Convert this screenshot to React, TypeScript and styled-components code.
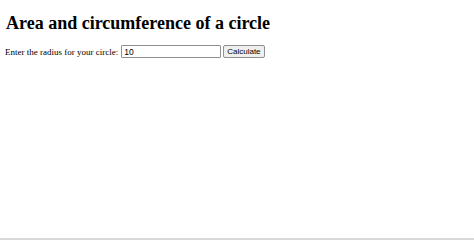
import styled, { createGlobalStyle } from 'styled-components'

const GlobalStyles = createGlobalStyle`
  html, body {
    margin: 0;
    padding: 0;
    background: #ffffff;
  }
  #root {
    min-height: 100vh;
    display: flex;
    flex-direction: column;
  }
`

const Page = styled.main`
  flex: 1;
  padding: 0 5px;
  font-family: "Liberation Serif", "Times New Roman", serif;
  color: #000;
`

const Title = styled.h1`
  margin: 12px 0 0 1px;
  font-size: 18px;
  font-weight: bold;
  line-height: 22px;
`

const Row = styled.form`
  display: flex;
  align-items: center;
  margin-top: 11px;
  font-size: 9px;
`

const Label = styled.label`
  margin-right: 3px;
`

const RadiusInput = styled.input`
  width: 100px;
  height: 13px;
  box-sizing: border-box;
  padding: 0 2px;
  border: 1px solid #8f8f8f;
  border-radius: 1px;
  font-family: "Liberation Sans", Arial, sans-serif;
  font-size: 8.5px;
`

const Button = styled.button`
  margin-left: 2px;
  height: 13px;
  box-sizing: border-box;
  padding: 0 3px;
  border: 1px solid #8f8f8f;
  border-radius: 2px;
  background: #efefef;
  font-family: "Liberation Sans", Arial, sans-serif;
  font-size: 8px;
  line-height: 1;
`

const BottomLine = styled.div`
  height: 2px;
  background: #d9d9d9;
`

function App() {
  return (
    <>
      <GlobalStyles />
      <Page>
        <Title>Area and circumference of a circle</Title>
        <Row onSubmit={(e) => e.preventDefault()}>
          <Label htmlFor="radius">Enter the radius for your circle:</Label>
          <RadiusInput id="radius" defaultValue="10" />
          <Button type="submit">Calculate</Button>
        </Row>
      </Page>
      <BottomLine />
    </>
  )
}

export default App
